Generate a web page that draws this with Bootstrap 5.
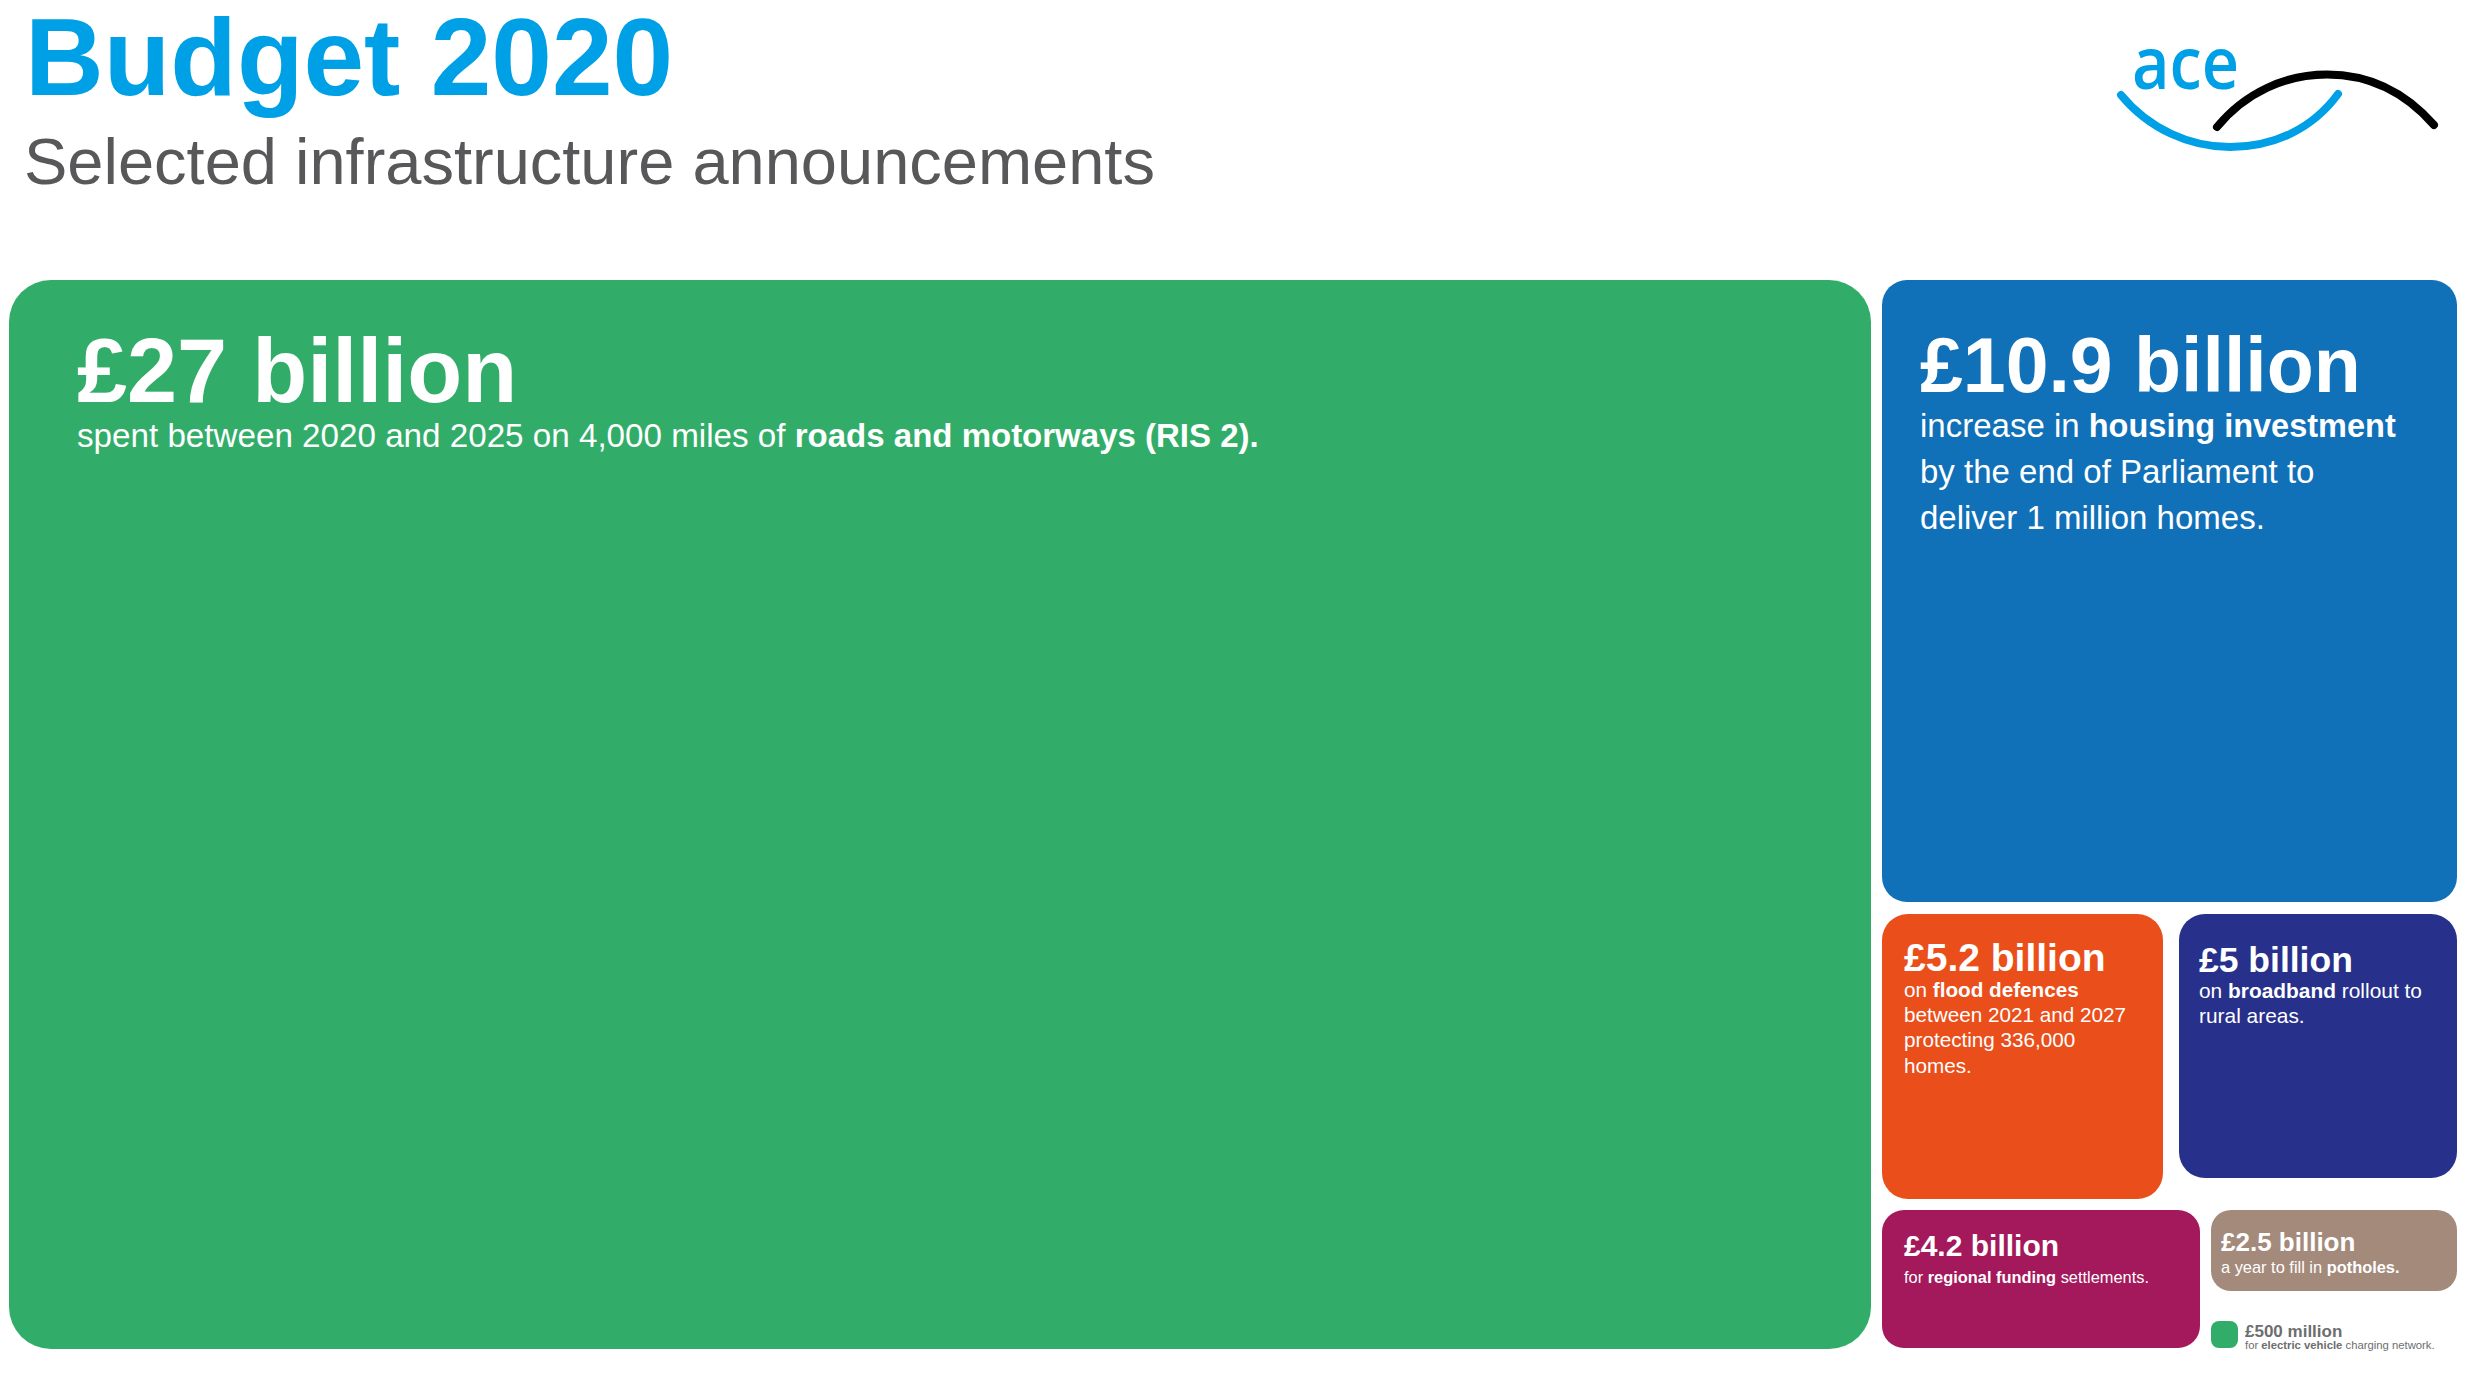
<!DOCTYPE html>
<html lang="en">
<head>
<meta charset="utf-8">
<title>Budget 2020</title>
<link href="https://cdn.jsdelivr.net/npm/bootstrap@5.3.0/dist/css/bootstrap.min.css" rel="stylesheet">
<style>
html,body{height:100%;}
body{font-family:"Liberation Sans",Arial,sans-serif;background:#fff;overflow:hidden;}
.pg{width:2467px;height:1376px;padding:0 10px 0 9px;}
.hdr{height:280px;}
.ttl{font-size:109px;font-weight:700;color:#00a0e6;line-height:1;margin:3px 0 0 16px;}
.subttl{font-size:65px;font-weight:400;color:#58585a;line-height:1;margin:17px 0 0 15px;}
.logo{width:347px;height:160px;}
.logo text{font-family:"Open Sans",sans-serif;font-size:72px;font-weight:600;fill:#00a0e6;}
.tm{height:1070px;gap:11px;}
.tile{color:#fff;}
.tile b{font-weight:700;}
.tile h2{font-weight:700;margin:0;}
.tile p{margin:0;}
.t-road{width:1862px;height:1069px;background:#31ad69;border-radius:42px;padding:45.5px 0 0 68px;}
.t-road h2{font-size:90px;line-height:1;}
.t-road p{font-size:33.2px;line-height:38px;margin-top:1px;}
.t-road b{font-size:33px;}
.sidec{width:575px;}
.t-house{height:622px;background:#1070b8;border-radius:25px;padding:47px 0 0 38px;}
.t-house h2{font-size:77px;line-height:76px;}
.t-house p{font-size:33px;line-height:46px;}
.t-house b{font-size:32.5px;}
.r1{margin-top:12px;gap:16px;height:296px;}
.t-flood{width:281px;height:285px;background:#ea4e1b;border-radius:26px;padding:25px 0 0 22px;}
.t-band{width:278px;height:264px;background:#27318b;border-radius:26px;padding:27.5px 0 0 20px;}
.t-flood h2{font-size:39px;line-height:38px;}
.t-band h2{font-size:35.5px;line-height:36px;}
.t-flood p{font-size:20.7px;line-height:25.2px;}
.t-band p{font-size:20.9px;line-height:25px;}
.r2{gap:11px;height:138px;}
.t-region{width:318px;height:138px;background:#a3195b;border-radius:22px;padding:18px 0 0 22px;}
.t-region h2{font-size:30px;line-height:35px;}
.t-region p{font-size:16.4px;line-height:20px;margin-top:3.5px;}
.sidec2{width:246px;}
.t-hole{height:81px;background:#a48a7b;border-radius:20px;padding:18px 0 0 10px;}
.t-hole h2{font-size:26px;line-height:28px;}
.t-hole p{font-size:16.4px;line-height:20px;margin-top:1px;}
.lgd{margin-top:30px;gap:7px;height:27px;color:#6d6e70;}
.lgd i{display:block;width:27px;height:27px;background:#31ad69;border-radius:8px;flex:none;}
.lgd strong{display:block;font-size:17px;line-height:17px;padding-top:5px;}
.lgd span{display:block;font-size:11.3px;line-height:11px;white-space:nowrap;}
</style>
</head>
<body>
<div class="pg">
  <header class="hdr d-flex justify-content-between">
    <div>
      <h1 class="ttl">Budget 2020</h1>
      <h2 class="subttl">Selected infrastructure announcements</h2>
    </div>
    <svg class="logo" viewBox="0 0 347 160">
      <text x="22" y="89" textLength="107" lengthAdjust="spacingAndGlyphs">ace</text>
      <path d="M11 95C39 129 80 147 120 147C165 147 203 128 228 94" fill="none" stroke="#00a0e6" stroke-width="8" stroke-linecap="round"/>
      <path d="M107 127C135 93 175 74.500 217 74.500C260 74.500 295 92 324 125" fill="none" stroke="#000" stroke-width="8" stroke-linecap="round"/>
    </svg>
  </header>
  <main class="tm d-flex">
    <section class="tile t-road">
      <h2>£27 billion</h2>
      <p>spent between 2020 and 2025 on 4,000 miles of <b>roads and motorways (RIS 2).</b></p>
    </section>
    <div class="sidec d-flex flex-column">
      <section class="tile t-house flex-shrink-0">
        <h2>£10.9 billion</h2>
        <p>increase in <b>housing investment</b><br>by the end of Parliament to<br>deliver 1 million homes.</p>
      </section>
      <div class="r1 d-flex align-items-start flex-shrink-0">
        <section class="tile t-flood">
          <h2>£5.2 billion</h2>
          <p>on <b>flood defences</b><br>between 2021 and 2027<br>protecting 336,000<br>homes.</p>
        </section>
        <section class="tile t-band">
          <h2>£5 billion</h2>
          <p>on <b>broadband</b> rollout to<br>rural areas.</p>
        </section>
      </div>
      <div class="r2 d-flex flex-shrink-0">
        <section class="tile t-region">
          <h2>£4.2 billion</h2>
          <p>for <b>regional funding</b> settlements.</p>
        </section>
        <div class="sidec2">
          <section class="tile t-hole">
            <h2>£2.5 billion</h2>
            <p>a year to fill in <b>potholes.</b></p>
          </section>
          <div class="lgd d-flex align-items-center">
            <i></i>
            <div><strong>£500 million</strong><span>for <b>electric vehicle</b> charging network.</span></div>
          </div>
        </div>
      </div>
    </div>
  </main>
</div>
<script src="https://cdn.jsdelivr.net/npm/bootstrap@5.3.0/dist/js/bootstrap.bundle.min.js"></script>
</body>
</html>
